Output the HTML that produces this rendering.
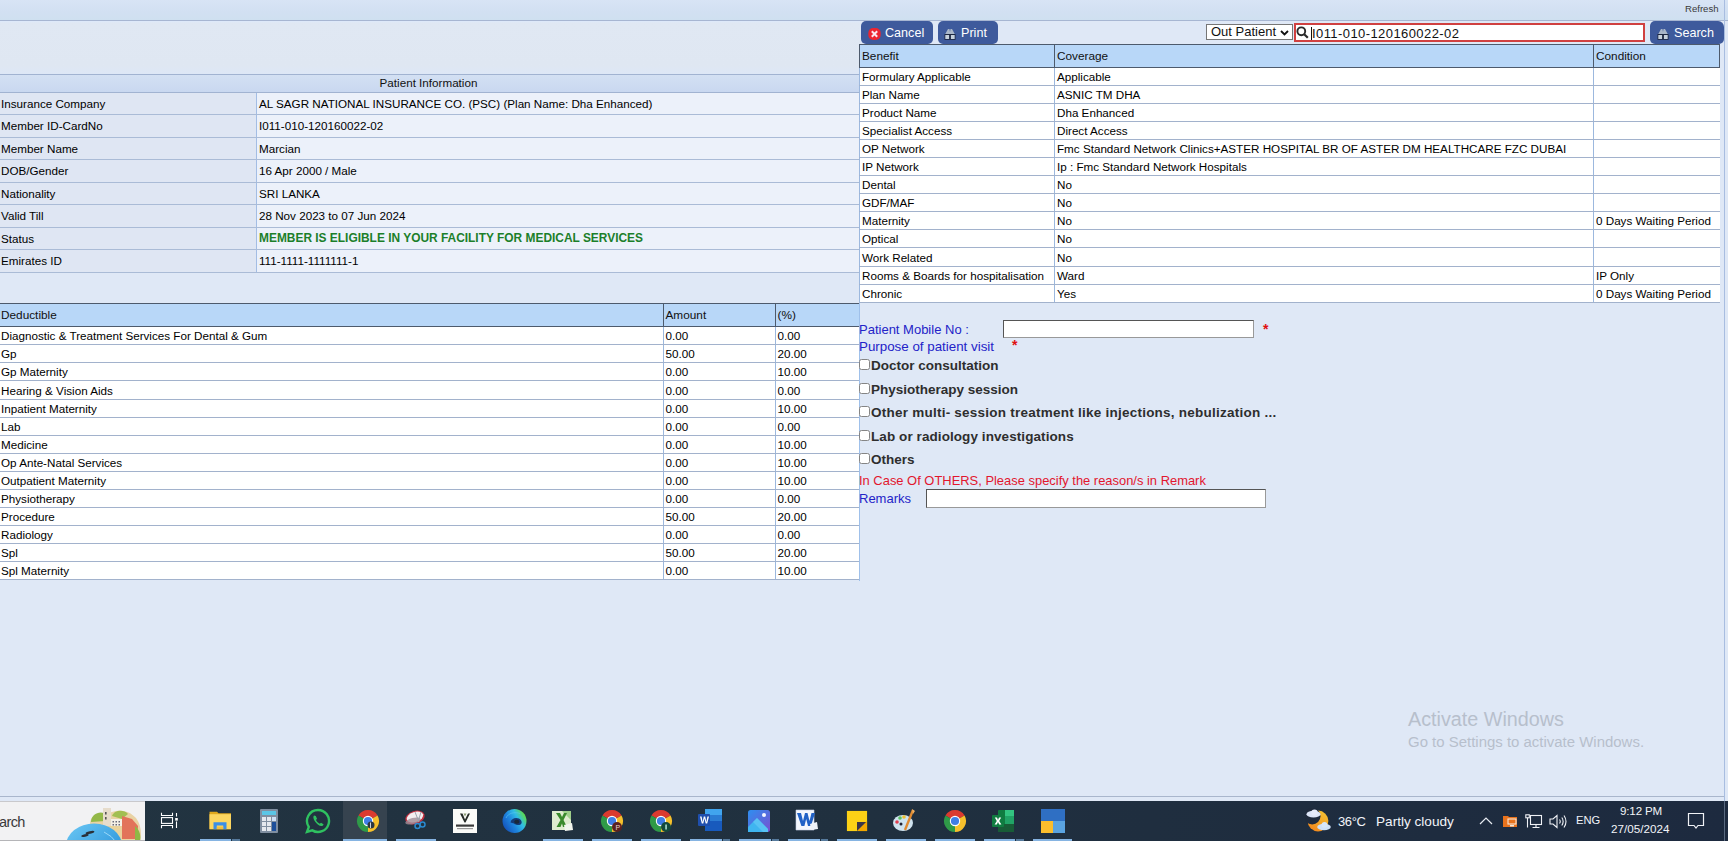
<!DOCTYPE html>
<html><head><meta charset="utf-8">
<style>
*{box-sizing:border-box;margin:0;padding:0}
html,body{width:1728px;height:841px;overflow:hidden}
body{position:relative;background:#dfe8f6;font-family:"Liberation Sans",sans-serif;color:#000}
.abs{position:absolute}
#topbar{left:0;top:0;width:1728px;height:21px;background:linear-gradient(#d8e4f5,#d2e0f2 60%,#cfe0f0);border-bottom:1px solid #a7b6d2}
#refresh{left:1685px;top:3px;font-size:9.6px;color:#3a3a3a}
#leftpanel{left:0;top:74px;width:860px;height:507px;border-right:1px solid #9fc0ea;background:#dfe8f6}
#lptop{left:0;top:21px;width:860px;height:53px;background:linear-gradient(#dde9fb 0px,#e0e8f3 2px,#dfe7f2 45px,#dde7f6 53px)}
/* patient info */
#pi{left:0;top:74px;width:859px}
#pi .hdr{height:19px;border-top:1px solid #a1b3d1;border-bottom:1px solid #a1b3d1;background:linear-gradient(#d3e0f3,#c9d8f0);text-align:center;font-size:11.66px;line-height:15px;color:#111;padding-right:2px}
#pi .row{position:relative;height:22px;border-bottom:1px solid #aabbd6;font-size:11.66px}
#pi .row .l{position:absolute;left:0;top:0;width:256px;height:100%;background:#dfe6f3;padding-left:1px;line-height:21px}
#pi .row .r{position:absolute;left:256px;top:0;right:0;height:100%;background:#ecf1fa;border-left:1px solid #a3bde4;padding-left:2px;line-height:21px}
#pi .row.t{height:23px}
.green{color:#1b7f2a;font-weight:bold;font-size:11.93px;position:relative;top:-1px}
/* tables */
table.g{border-collapse:collapse;position:absolute;table-layout:fixed;font-size:11.66px}
table.g th{background:#b8d7f8;font-weight:normal;text-align:left;border-top:1px solid #4d5a6c;border-bottom:1px solid #4d5a6c;border-left:1px solid #4d5a6c;height:23px;padding:0 2px;font-size:11.8px;color:#111}
table.g td{background:#fff;border-bottom:1px solid #a2b2cc;border-left:1px solid #9cb8de;height:18px;padding:0 1px 0 2px;white-space:nowrap;overflow:hidden;line-height:17px}
#ded{left:0;top:303px;width:859px}
#ben{left:859px;top:44px;width:861px}

.btn{position:absolute;top:21px;height:23px;background:#3e5a9c;border-radius:5px;color:#fff;font-size:12.6px;line-height:25px}
.btn .ic{position:absolute;top:7px;width:12px;height:12px}
#cancel{left:861px;width:72px}
#print{left:938px;width:60px}
#search{left:1650px;width:74px;border-top-right-radius:6px}
#sel{left:1206px;top:24px;width:87px;height:16px;border:1px solid #767676;background:#fff;font-size:13px;line-height:14px;padding-left:4px;color:#111}
#sinp{left:1294px;top:23px;width:351px;height:19px;border:2px solid #d04040;background:#fff;font-size:13px;line-height:15px;color:#111}
#ben td{padding-left:2px}
.lbl{position:absolute;color:#2323c8;font-size:13px;white-space:nowrap}
.req{position:absolute;color:#e01010;font-size:14px;font-weight:bold}
.cbr{position:absolute;left:859px;height:16px;white-space:nowrap}
.cb{position:absolute;left:0;top:1px;width:11px;height:11px;border:1px solid #858585;border-radius:2.5px;background:#fff}
.cbt{position:absolute;left:12px;top:0px;font-weight:bold;font-size:13.5px;color:#2e2e2e}
.inp{position:absolute;background:#fff;border:1px solid #555;border-right-color:#999;border-bottom-color:#999}
</style></head>
<body>
<div id="topbar" class="abs"></div>
<div id="refresh" class="abs">Refresh</div>
<div id="leftpanel" class="abs"></div><div id="lptop" class="abs"></div>

<div id="pi" class="abs">
 <div class="hdr">Patient Information</div>
 <div class="row"><div class="l">Insurance Company</div><div class="r">AL SAGR NATIONAL INSURANCE CO. (PSC) (Plan Name: Dha Enhanced)</div></div>
 <div class="row t"><div class="l">Member ID-CardNo</div><div class="r">I011-010-120160022-02</div></div>
 <div class="row"><div class="l">Member Name</div><div class="r">Marcian</div></div>
 <div class="row t"><div class="l">DOB/Gender</div><div class="r">16 Apr 2000 / Male</div></div>
 <div class="row"><div class="l">Nationality</div><div class="r">SRI LANKA</div></div>
 <div class="row t"><div class="l">Valid Till</div><div class="r">28 Nov 2023 to 07 Jun 2024</div></div>
 <div class="row"><div class="l">Status</div><div class="r"><span class="green">MEMBER IS ELIGIBLE IN YOUR FACILITY FOR MEDICAL SERVICES</span></div></div>
 <div class="row t"><div class="l">Emirates ID</div><div class="r">111-1111-1111111-1</div></div>
</div>

<table id="ded" class="g">
<colgroup><col style="width:663px"><col style="width:112px"><col style="width:84px"></colgroup>
<tr><th style="border-left:0;padding-left:1px">Deductible</th><th>Amount</th><th>(%)</th></tr>
<tr><td style="border-left:0;padding-left:1px">Diagnostic &amp; Treatment Services For Dental &amp; Gum</td><td>0.00</td><td>0.00</td></tr>
<tr><td style="border-left:0;padding-left:1px">Gp</td><td>50.00</td><td>20.00</td></tr>
<tr><td style="border-left:0;padding-left:1px">Gp Maternity</td><td>0.00</td><td>10.00</td></tr>
<tr style="height:19px"><td style="border-left:0;padding-left:1px;height:19px">Hearing &amp; Vision Aids</td><td>0.00</td><td>0.00</td></tr>
<tr><td style="border-left:0;padding-left:1px">Inpatient Maternity</td><td>0.00</td><td>10.00</td></tr>
<tr><td style="border-left:0;padding-left:1px">Lab</td><td>0.00</td><td>0.00</td></tr>
<tr><td style="border-left:0;padding-left:1px">Medicine</td><td>0.00</td><td>10.00</td></tr>
<tr><td style="border-left:0;padding-left:1px">Op Ante-Natal Services</td><td>0.00</td><td>10.00</td></tr>
<tr><td style="border-left:0;padding-left:1px">Outpatient Maternity</td><td>0.00</td><td>10.00</td></tr>
<tr><td style="border-left:0;padding-left:1px">Physiotherapy</td><td>0.00</td><td>0.00</td></tr>
<tr><td style="border-left:0;padding-left:1px">Procedure</td><td>50.00</td><td>20.00</td></tr>
<tr><td style="border-left:0;padding-left:1px">Radiology</td><td>0.00</td><td>0.00</td></tr>
<tr><td style="border-left:0;padding-left:1px">Spl</td><td>50.00</td><td>20.00</td></tr>
<tr><td style="border-left:0;padding-left:1px">Spl Maternity</td><td>0.00</td><td>10.00</td></tr>
</table>


<div id="cancel" class="btn"><svg class="ic" style="left:7px;top:7px;width:13px;height:12px" viewBox="0 0 13 12"><rect x="0.3" y="0" width="12.4" height="12" rx="5" fill="#ec2530"/><path d="M3.8 3.3L9.2 8.7M9.2 3.3L3.8 8.7" stroke="#fbe8ee" stroke-width="2"/></svg><span style="position:absolute;left:24px;top:0">Cancel</span></div>
<div id="print" class="btn"><svg class="ic" style="left:6px;top:6px;width:12px;height:13px" viewBox="0 0 12 13"><path d="M1 7.5L4 2H5.5L6 5L6.5 2H8L11 7.5Z" fill="#a9b6c8"/><rect x="0.5" y="7" width="11" height="5.8" fill="#1c2640"/><rect x="1.3" y="8" width="3.8" height="4" fill="#c5d0dc"/><rect x="6.9" y="8" width="3.8" height="4" fill="#c5d0dc"/></svg><span style="position:absolute;left:23px;top:0">Print</span></div>
<div id="sel" class="abs">Out Patient<svg style="position:absolute;left:73px;top:5px" width="9" height="6" viewBox="0 0 9 6"><path d="M1 1L4.5 4.5L8 1" stroke="#111" stroke-width="1.8" fill="none"/></svg></div>
<div id="sinp" class="abs"><svg style="position:absolute;left:0px;top:1px" width="13" height="13" viewBox="0 0 13 13"><circle cx="5.3" cy="5.3" r="3.9" stroke="#2a2a2a" stroke-width="1.9" fill="none"/><path d="M8.2 8.2L11.8 11.8" stroke="#2a2a2a" stroke-width="2.2"/></svg><div style="position:absolute;left:15px;top:2px;width:1px;height:13px;background:#111"></div><span style="position:absolute;left:16px;top:1px;letter-spacing:0.42px">I011-010-120160022-02</span></div>
<div id="search" class="btn"><svg class="ic" style="left:7px;top:6px;width:12px;height:13px" viewBox="0 0 12 13"><path d="M1 7.5L4 2H5.5L6 5L6.5 2H8L11 7.5Z" fill="#a9b6c8"/><rect x="0.5" y="7" width="11" height="5.8" fill="#1c2640"/><rect x="1.3" y="8" width="3.8" height="4" fill="#c5d0dc"/><rect x="6.9" y="8" width="3.8" height="4" fill="#c5d0dc"/></svg><span style="position:absolute;left:24px;top:0">Search</span></div>

<table id="ben" class="g">
<colgroup><col style="width:195px"><col style="width:539px"><col style="width:126px"></colgroup>
<tr><th>Benefit</th><th>Coverage</th><th style="border-right:1px solid #4d5a6c">Condition</th></tr>
<tr><td>Formulary Applicable</td><td>Applicable</td><td></td></tr>
<tr><td>Plan Name</td><td>ASNIC TM DHA</td><td></td></tr>
<tr><td>Product Name</td><td>Dha Enhanced</td><td></td></tr>
<tr><td>Specialist Access</td><td>Direct Access</td><td></td></tr>
<tr><td>OP Network</td><td>Fmc Standard Network Clinics+ASTER HOSPITAL BR OF ASTER DM HEALTHCARE FZC DUBAI</td><td></td></tr>
<tr><td>IP Network</td><td>Ip : Fmc Standard Network Hospitals</td><td></td></tr>
<tr><td>Dental</td><td>No</td><td></td></tr>
<tr><td>GDF/MAF</td><td>No</td><td></td></tr>
<tr><td>Maternity</td><td>No</td><td>0 Days Waiting Period</td></tr>
<tr><td>Optical</td><td>No</td><td></td></tr>
<tr style="height:19px"><td style="height:19px">Work Related</td><td>No</td><td></td></tr>
<tr><td>Rooms &amp; Boards for hospitalisation</td><td>Ward</td><td>IP Only</td></tr>
<tr><td>Chronic</td><td>Yes</td><td>0 Days Waiting Period</td></tr>
</table>

<div class="lbl" style="left:859px;top:322px">Patient Mobile No :</div>
<div class="inp" style="left:1003px;top:320px;width:251px;height:18px"></div>
<div class="req" style="left:1263px;top:321px">*</div>
<div class="lbl" style="left:859px;top:339px;font-size:13.35px">Purpose of patient visit</div>
<div class="req" style="left:1012px;top:337px">*</div>
<div class="cbr" style="top:358px"><div class="cb"></div><div class="cbt">Doctor consultation</div></div>
<div class="cbr" style="top:382px"><div class="cb"></div><div class="cbt">Physiotherapy session</div></div>
<div class="cbr" style="top:405px"><div class="cb"></div><div class="cbt" style="letter-spacing:0.24px">Other multi- session treatment like injections, nebulization ...</div></div>
<div class="cbr" style="top:429px"><div class="cb"></div><div class="cbt" style="letter-spacing:0.08px">Lab or radiology investigations</div></div>
<div class="cbr" style="top:452px"><div class="cb"></div><div class="cbt">Others</div></div>
<div class="lbl" style="left:859px;top:473px;color:#e2162e;font-size:12.93px">In Case Of OTHERS, Please specify the reason/s in Remark</div>
<div class="lbl" style="left:859px;top:491px">Remarks</div>
<div class="inp" style="left:926px;top:489px;width:340px;height:19px"></div>
<div class="abs" style="left:0;top:796px;width:1725px;height:1px;background:#a9b6cc"></div>
<div class="abs" style="left:1724px;top:0;width:1px;height:841px;background:#a8bde0"></div>
<div class="abs" style="left:1408px;top:708px;font-size:19.77px;color:#b7bfcc;white-space:nowrap">Activate Windows</div>
<div class="abs" style="left:1408px;top:733px;font-size:14.96px;color:#b7bfcc;white-space:nowrap">Go to Settings to activate Windows.</div>
<div id="taskbar" class="abs" style="left:0;top:801px;width:1728px;height:40px;background:linear-gradient(90deg,#223441 0%,#20303f 50%,#1d2a3f 100%)"></div>
<div class="abs" style="left:1724px;top:801px;width:1px;height:40px;background:#5a6a80"></div>
<div class="abs" style="left:0;top:801px;width:145px;height:40px;background:#f2f2f3;border-top:1px solid #c9c9cc;border-bottom:1px solid #b5b5b8;overflow:hidden">
  <div style="position:absolute;left:-1px;top:12px;font-size:14.5px;color:#3a3a3a;letter-spacing:-0.6px">arch</div>
  <svg style="position:absolute;left:60px;top:4px" width="85" height="40" viewBox="0 0 85 40">
    <defs><linearGradient id="sg" x1="0" y1="0" x2="1" y2="1"><stop offset="0" stop-color="#6cc8f4"/><stop offset="1" stop-color="#1f8ad6"/></linearGradient></defs>
    <path d="M30 18C30 10 38 6 46 8L52 6C60 3 70 5 76 12C81 18 82 28 80 36H30Z" fill="#e9d3a4"/>
    <path d="M31 16C31 9 38 5 44 7L45 15Z" fill="#93b848"/>
    <path d="M52 10C54 4 64 3 68 8L62 13Z" fill="#a2bf52"/>
    <rect x="43" y="2" width="8" height="18" fill="#e6dccb"/>
    <rect x="45" y="6" width="1.6" height="2.5" fill="#555"/><rect x="45" y="11" width="1.6" height="2.5" fill="#555"/>
    <rect x="51" y="13" width="12" height="8" fill="#f5f0e6"/>
    <g fill="#6a6a78"><rect x="52.5" y="15" width="1.5" height="1.5"/><rect x="55.5" y="15" width="1.5" height="1.5"/><rect x="58.5" y="15" width="1.5" height="1.5"/><rect x="52.5" y="18" width="1.5" height="1.5"/><rect x="55.5" y="18" width="1.5" height="1.5"/><rect x="58.5" y="18" width="1.5" height="1.5"/></g>
    <path d="M48 20H66V35H48Z" fill="#ead39c"/><path d="M62 10L72 13L78 20L77 33H62Z" fill="#e2735a"/>
    <path d="M75 20C80 24 81 30 80 35L75 35Z" fill="#8fb845"/>
    
    <path d="M29 21L38 18L44 20Z" fill="#b05040"/>
    <ellipse cx="34" cy="39.6" rx="28" ry="22" fill="url(#sg)"/>
    <ellipse cx="30" cy="26.5" rx="4.5" ry="1.3" fill="#2a3038" transform="rotate(-12 30 26.5)"/>
    <ellipse cx="25" cy="29.5" rx="3.8" ry="1.2" fill="#2a3038" transform="rotate(-12 25 29.5)"/>
    <path d="M44 26Q52 30 56 36" stroke="#9ad8f8" stroke-width="1" fill="none"/>
  </svg>
</div>
<div class="abs" style="left:343px;top:801px;width:44px;height:40px;background:#36434f"></div>
<div class="abs" style="left:156.5px;top:809.0px;width:24px;height:24px;line-height:0"><svg width="24" height="24" viewBox="0 0 24 24" fill="none" stroke="#fff" stroke-width="1.1"><path d="M4.5 3.8V6.5H15.5V3.8M4.5 19.2V16.5H15.5V19.2M19.5 4V7.5M19.5 12.5V19"/><rect x="4.5" y="8.6" width="11" height="5.8"/><rect x="18.2" y="9" width="2.6" height="2.6" fill="#fff" stroke="none"/></svg></div>
<div class="abs" style="left:207.5px;top:809.0px;width:24px;height:24px;line-height:0"><svg width="24" height="24" viewBox="0 0 24 24"><path d="M1.5 2.8H9L10.5 4.2H23V20.2H1.5Z" fill="#e0a81c"/><rect x="1.5" y="5.2" width="21.5" height="15" fill="#fcd660"/><path d="M5.5 20.2V13.3H18.5V20.2H15.2V16.6H8.8V20.2Z" fill="#3a8ee6"/><rect x="8.8" y="17.6" width="6.4" height="2.6" fill="#f2c040"/></svg></div>
<div class="abs" style="left:257.0px;top:809.0px;width:24px;height:24px;line-height:0"><svg width="24" height="24" viewBox="0 0 24 24"><rect x="3" y="0" width="18" height="24" rx="1" fill="#7f8ea0"/><rect x="5" y="2" width="14" height="4" fill="#5bc6e6"/><g fill="#e4e8ee"><rect x="5" y="8" width="4" height="4"/><rect x="10" y="8" width="4" height="4"/><rect x="15" y="8" width="4" height="4" fill="#cfe0f5"/><rect x="5" y="13" width="4" height="4"/><rect x="10" y="13" width="4" height="4"/><rect x="5" y="18" width="4" height="4"/><rect x="10" y="18" width="4" height="4"/></g><rect x="15" y="13" width="4" height="9" fill="#1d4f9a"/></svg></div>
<div class="abs" style="left:305.0px;top:808.0px;width:26px;height:26px;line-height:0"><svg width="26" height="26" viewBox="0 0 26 26"><path d="M13 2A11 11 0 1 1 7.3 22.4L2 24L3.8 19A11 11 0 0 1 13 2Z" fill="none" stroke="#2fc160" stroke-width="2.4"/><path d="M9 7.5C8 8.5 8 10.5 10 13.5C12 16.5 15 18.5 17 18C18 17.7 18.5 17 18.5 16.2L16 14.8L14.8 15.8C13.2 15 11.8 13.6 11 12L12 10.8L10.8 8Z" fill="#2fc160"/></svg></div>
<div class="abs" style="left:355.5px;top:809.0px;width:24px;height:24px;line-height:0"><svg width="24" height="24" viewBox="0 0 24 24"><path d="M12 12L2.47 6.5A11 11 0 0 1 21.53 6.5Z" fill="#db3a2f"/><path d="M12 12L21.53 6.5A11 11 0 0 1 12 23Z" fill="#f6c02c"/><path d="M12 12L12 23A11 11 0 0 1 2.47 6.5Z" fill="#2f9a48"/><circle cx="12" cy="12" r="5.2" fill="#fff"/><circle cx="12" cy="12" r="4.1" fill="#3f7ee6"/><circle cx="15" cy="16" r="3.5" fill="#2b3742"/><path d="M14.5 13.5V19" stroke="#cfd6dd" stroke-width="1"/></svg></div>
<div class="abs" style="left:403.0px;top:808.0px;width:26px;height:26px;line-height:0"><svg width="26" height="24" viewBox="0 0 26 24"><ellipse cx="12" cy="9.5" rx="10" ry="6.5" transform="rotate(-18 12 9.5)" fill="#c23040"/><ellipse cx="12" cy="9" rx="8.5" ry="5" transform="rotate(-18 12 9)" fill="#f4eef0"/><ellipse cx="10" cy="13" rx="8" ry="3" transform="rotate(-15 10 13)" fill="#a08c96" opacity="0.8"/><path d="M12 4L16 14M18 4L15 14" stroke="#9aa3ad" stroke-width="1"/><circle cx="14.5" cy="18" r="2.5" fill="none" stroke="#2a8ad0" stroke-width="1.5"/><circle cx="19.5" cy="16.5" r="2.5" fill="none" stroke="#2a8ad0" stroke-width="1.5"/></svg></div>
<div class="abs" style="left:453.0px;top:809.0px;width:24px;height:24px;line-height:0"><svg width="24" height="24" viewBox="0 0 24 24"><rect x="0" y="0" width="24" height="24" fill="#fbfbf8"/><path d="M7 4.5L11.5 13.5H12.5L17 4.5H15L12 10.5L9.5 4.5Z" fill="#262a26"/><path d="M10.5 4.5H13.5L12 7.5Z" fill="#8a9a70"/><rect x="3" y="15.5" width="18" height="2.2" fill="#3a3a3a"/><rect x="4" y="19" width="16" height="1.2" fill="#9a9a9a"/></svg></div>
<div class="abs" style="left:501.5px;top:809.0px;width:25px;height:24px;line-height:0"><svg width="25" height="24" viewBox="0 0 25 24"><defs><linearGradient id="eg" x1="0.1" y1="0.9" x2="1" y2="0.35"><stop offset="0" stop-color="#1450b8"/><stop offset="0.4" stop-color="#1e84de"/><stop offset="0.7" stop-color="#30bce6"/><stop offset="1" stop-color="#5edc4a"/></linearGradient></defs><ellipse cx="12.5" cy="12" rx="12" ry="12" fill="url(#eg)"/><path d="M8.5 13.5C9 9.5 13.5 8 17 9.5C20 11 20.5 14.5 18.5 15.5C16.5 16.5 13.5 16 12 14.5Z" fill="#133b78"/><ellipse cx="14.8" cy="12.8" rx="2.6" ry="2" fill="#1a2838"/><path d="M4 9C6 4 13 2.5 18 4.5" stroke="#5cc8f0" stroke-width="1" fill="none" opacity="0.6"/></svg></div>
<div class="abs" style="left:550.0px;top:809.0px;width:24px;height:24px;line-height:0"><svg width="24" height="24" viewBox="0 0 24 24"><path d="M2 2H21V21H2Z" fill="#dfeccf"/><path d="M2 2H12L21 11V2Z" fill="#9fcf8a"/><path d="M6 4H10L12 8L14 4H17L13.5 11L17 18H13L12 14.5L10.5 18H6.5L10.5 11Z" fill="#3a8a2c"/><path d="M14 16L22 14L23 21L15 22Z" fill="#f2f5ee"/></svg></div>
<div class="abs" style="left:600.0px;top:809.0px;width:24px;height:24px;line-height:0"><svg width="24" height="24" viewBox="0 0 24 24"><path d="M12 12L2.47 6.5A11 11 0 0 1 21.53 6.5Z" fill="#db3a2f"/><path d="M12 12L21.53 6.5A11 11 0 0 1 12 23Z" fill="#f6c02c"/><path d="M12 12L12 23A11 11 0 0 1 2.47 6.5Z" fill="#2f9a48"/><circle cx="12" cy="12" r="5.2" fill="#fff"/><circle cx="12" cy="12" r="4.1" fill="#3f7ee6"/><circle cx="17" cy="18" r="5" fill="#5a2220"/><text x="15.4" y="21" font-size="7" fill="#e8d8d0" font-family="Liberation Sans">P</text></svg></div>
<div class="abs" style="left:649.0px;top:809.0px;width:24px;height:24px;line-height:0"><svg width="24" height="24" viewBox="0 0 24 24"><path d="M12 12L2.47 6.5A11 11 0 0 1 21.53 6.5Z" fill="#db3a2f"/><path d="M12 12L21.53 6.5A11 11 0 0 1 12 23Z" fill="#f6c02c"/><path d="M12 12L12 23A11 11 0 0 1 2.47 6.5Z" fill="#2f9a48"/><circle cx="12" cy="12" r="5.2" fill="#fff"/><circle cx="12" cy="12" r="4.1" fill="#3f7ee6"/><circle cx="17" cy="18" r="5" fill="#144a3c"/><rect x="16.4" y="15.5" width="1.3" height="5" fill="#cfe"/></svg></div>
<div class="abs" style="left:697.0px;top:808.0px;width:26px;height:26px;line-height:0"><svg width="26" height="24" viewBox="0 0 26 24"><rect x="8" y="1" width="17" height="22" rx="1" fill="#2b7cd3"/><rect x="8" y="1" width="17" height="6" fill="#41a5ee"/><rect x="8" y="13" width="17" height="10" fill="#185abd"/><rect x="1" y="6" width="12" height="12" rx="1" fill="#1f4fae"/><path d="M3 8.5H4.6L5.6 14L6.8 8.5H8.2L9.4 14L10.4 8.5H12L10.2 15.5H8.7L7.5 10.5L6.3 15.5H4.8Z" fill="#fff"/></svg></div>
<div class="abs" style="left:747.0px;top:809.0px;width:24px;height:24px;line-height:0"><svg width="24" height="24" viewBox="0 0 24 24"><defs><linearGradient id="pg" x1="0" y1="0" x2="1" y2="1"><stop offset="0" stop-color="#2d8ff0"/><stop offset="1" stop-color="#7a4fd0"/></linearGradient></defs><rect x="1" y="1" width="22" height="22" rx="2.5" fill="url(#pg)"/><circle cx="17" cy="6" r="2" fill="#f4f6ff"/><path d="M1 18L10 9L21 20V23H1Z" fill="#3fb5f0"/><path d="M10 9L21 20V23H16L6 13Z" fill="#64c8f5" opacity="0.7"/></svg></div>
<div class="abs" style="left:795.0px;top:809.0px;width:24px;height:24px;line-height:0"><svg width="24" height="24" viewBox="0 0 24 24"><path d="M1 1H19V21H1Z" fill="#f4f7fd" stroke="#c8d2e6" stroke-width="0.6"/><path d="M2 4H6L8 12L10 4H12.5L14.5 12L16.5 4H20L16 17H13L11.2 10L9.4 17H6.4Z" fill="#2262c6"/><path d="M15 15L22 13L23 20L16 21Z" fill="#eef2f8"/></svg></div>
<div class="abs" style="left:845.5px;top:810.0px;width:22px;height:22px;line-height:0"><svg width="22" height="22" viewBox="0 0 24 24"><rect x="1" y="1" width="22" height="22" fill="#fcd116"/><path d="M12 23H23V12Z" fill="#f2a600"/><path d="M12 23L22 13H12Z" fill="#3a3448"/></svg></div>
<div class="abs" style="left:892.0px;top:808.0px;width:26px;height:26px;line-height:0"><svg width="26" height="26" viewBox="0 0 26 26"><ellipse cx="11" cy="15" rx="10" ry="8" fill="#cfe3ef"/><circle cx="5" cy="14" r="1.8" fill="#e04050"/><circle cx="8" cy="10" r="1.8" fill="#5ac060"/><circle cx="12" cy="9" r="1.8" fill="#f0c030"/><circle cx="9" cy="16" r="1.5" fill="#223"/><path d="M21 2L13 22" stroke="#e08a30" stroke-width="2.4"/><path d="M20 1L23 3L21 6Z" fill="#f0b060"/></svg></div>
<div class="abs" style="left:943.0px;top:809.0px;width:24px;height:24px;line-height:0"><svg width="24" height="24" viewBox="0 0 24 24"><path d="M12 12L2.47 6.5A11 11 0 0 1 21.53 6.5Z" fill="#db3a2f"/><path d="M12 12L21.53 6.5A11 11 0 0 1 12 23Z" fill="#f6c02c"/><path d="M12 12L12 23A11 11 0 0 1 2.47 6.5Z" fill="#2f9a48"/><circle cx="12" cy="12" r="5.2" fill="#fff"/><circle cx="12" cy="12" r="4.1" fill="#3f7ee6"/></svg></div>
<div class="abs" style="left:991.0px;top:809.0px;width:24px;height:24px;line-height:0"><svg width="24" height="24" viewBox="0 0 24 24"><rect x="7" y="1" width="16" height="22" rx="1" fill="#107c41"/><rect x="14" y="1" width="9" height="6" fill="#33c481"/><rect x="14" y="7" width="9" height="8" fill="#21a366"/><rect x="7" y="15" width="16" height="8" fill="#185c37"/><rect x="1" y="6" width="12" height="12" rx="1" fill="#107c41"/><path d="M3.8 8.5H6L7 11L8 8.5H10.2L8.2 12L10.4 15.5H8.2L7 13L5.8 15.5H3.6L5.8 12Z" fill="#fff"/></svg></div>
<div class="abs" style="left:1041.0px;top:809.0px;width:24px;height:24px;line-height:0"><svg width="24" height="24" viewBox="0 0 24 24"><rect x="0" y="0" width="24" height="12" fill="#2f6fc3"/><rect x="0" y="12" width="12" height="12" fill="#fbbd2c"/><rect x="12" y="12" width="12" height="12" fill="#5aa3e0"/></svg></div>
<div class="abs" style="left:200px;top:839px;width:31px;height:2px;background:#86b4e2"></div>
<div class="abs" style="left:232px;top:839px;width:8px;height:2px;background:#567a9c"></div>
<div class="abs" style="left:343px;top:839px;width:44px;height:2px;background:#86b4e2"></div>
<div class="abs" style="left:396px;top:839px;width:40px;height:2px;background:#86b4e2"></div>
<div class="abs" style="left:543px;top:839px;width:40px;height:2px;background:#86b4e2"></div>
<div class="abs" style="left:592px;top:839px;width:40px;height:2px;background:#86b4e2"></div>
<div class="abs" style="left:641px;top:839px;width:40px;height:2px;background:#86b4e2"></div>
<div class="abs" style="left:690px;top:839px;width:32px;height:2px;background:#86b4e2"></div>
<div class="abs" style="left:723px;top:839px;width:7px;height:2px;background:#567a9c"></div>
<div class="abs" style="left:739px;top:839px;width:32px;height:2px;background:#86b4e2"></div>
<div class="abs" style="left:772px;top:839px;width:7px;height:2px;background:#567a9c"></div>
<div class="abs" style="left:788px;top:839px;width:32px;height:2px;background:#86b4e2"></div>
<div class="abs" style="left:821px;top:839px;width:7px;height:2px;background:#567a9c"></div>
<div class="abs" style="left:837px;top:839px;width:40px;height:2px;background:#86b4e2"></div>
<div class="abs" style="left:886px;top:839px;width:40px;height:2px;background:#86b4e2"></div>
<div class="abs" style="left:935px;top:839px;width:40px;height:2px;background:#86b4e2"></div>
<div class="abs" style="left:983.5px;top:839px;width:31.5px;height:2px;background:#86b4e2"></div>
<div class="abs" style="left:1016px;top:839px;width:7.5px;height:2px;background:#567a9c"></div>
<div class="abs" style="left:1032.5px;top:839px;width:39.5px;height:2px;background:#86b4e2"></div>
<div class="abs" style="left:1305px;top:808px;width:27px;height:25px">
 <svg width="27" height="25" viewBox="0 0 27 25"><defs><linearGradient id="mg" x1="0.8" y1="0" x2="0.2" y2="1"><stop offset="0" stop-color="#f4c232"/><stop offset="1" stop-color="#f2861c"/></linearGradient></defs>
 <circle cx="13" cy="13" r="10.4" fill="url(#mg)"/><circle cx="7.2" cy="8.2" r="8.3" fill="#1f2b3d"/>
 <ellipse cx="8.5" cy="6.2" rx="7" ry="3.4" fill="#dde6f8"/><circle cx="9.5" cy="4.6" r="3.2" fill="#e6ecfa"/>
 <ellipse cx="19" cy="19" rx="6.8" ry="3.2" fill="#cfe0f6"/><circle cx="19.5" cy="16.8" r="2.9" fill="#d8e6f8"/></svg>
</div>
<div class="abs" style="left:1338px;top:814px;font-size:13px;color:#f2f4f8;white-space:nowrap;letter-spacing:-0.4px">36°C</div>
<div class="abs" style="left:1376px;top:814px;font-size:13.6px;color:#f2f4f8;white-space:nowrap">Partly cloudy</div>
<svg class="abs" style="left:1479px;top:816px" width="14" height="9" viewBox="0 0 14 9"><path d="M1 8L7 2L13 8" stroke="#e8ecf2" stroke-width="1.2" fill="none"/></svg>
<svg class="abs" style="left:1502px;top:814px" width="16" height="14" viewBox="0 0 16 14"><path d="M1 2H6L7 3H15V13H1Z" fill="#e8721c"/><rect x="6" y="5" width="8" height="5" fill="none" stroke="#f6e6d6" stroke-width="1.1"/><rect x="8" y="11" width="4" height="1.5" fill="#f6e6d6"/></svg>
<svg class="abs" style="left:1525px;top:814px" width="18" height="15" viewBox="0 0 18 15" fill="none" stroke="#f0f2f6" stroke-width="1.1"><rect x="5.5" y="1.5" width="11" height="9"/><path d="M11 10.5V13.5M7.5 13.5H14.5M2.5 1.5V13.5"/><rect x="0.8" y="0.8" width="3.5" height="3" fill="#1e2a3e"/></svg>
<svg class="abs" style="left:1549px;top:814px" width="18" height="15" viewBox="0 0 18 15" fill="none" stroke="#f0f2f6" stroke-width="1.1"><path d="M1 5H4L8 1.5V13.5L4 10H1Z"/><path d="M10.5 5.5Q12 7.5 10.5 9.5M12.8 3.5Q15.5 7.5 12.8 11.5M15 1.5Q19 7.5 15 13.5"/></svg>
<div class="abs" style="left:1576px;top:814px;font-size:11.2px;color:#f2f4f8;white-space:nowrap">ENG</div>
<div class="abs" style="left:1620px;top:804px;font-size:11.6px;color:#f2f4f8;white-space:nowrap;letter-spacing:-0.15px">9:12 PM</div>
<div class="abs" style="left:1611px;top:822px;font-size:11.7px;color:#f2f4f8;white-space:nowrap;letter-spacing:0px">27/05/2024</div>
<svg class="abs" style="left:1687px;top:812px" width="18" height="18" viewBox="0 0 18 18" fill="none" stroke="#f0f2f6" stroke-width="1.2"><path d="M1.5 1.5H16.5V13.5H11L9 16L7 13.5H1.5Z"/></svg>

</body></html>
